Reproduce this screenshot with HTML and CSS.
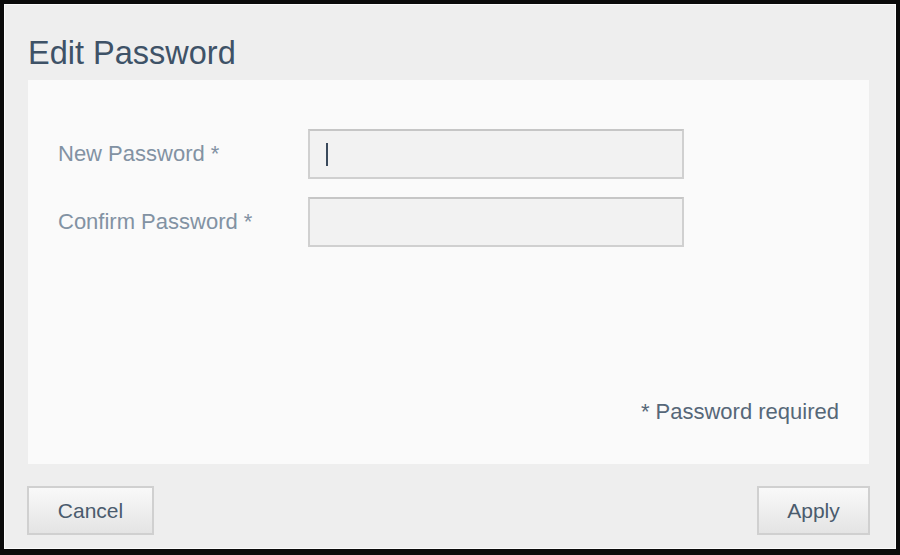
FILE: index.html
```html
<!DOCTYPE html>
<html lang="en">
<head>
<meta charset="utf-8">
<title>Edit Password</title>
<link rel="stylesheet" href="styles.css">
</head>
<body>
<div class="frame">
  <div class="dialog">
    <h1 class="title">Edit Password</h1>
    <div class="panel">
      <div class="row">
        <label class="label">New Password *</label>
        <div class="field"><span class="caret"></span></div>
      </div>
      <div class="row">
        <label class="label">Confirm Password *</label>
        <div class="field"></div>
      </div>
      <p class="note">* Password required</p>
    </div>
    <div class="footer">
      <button class="btn btn-cancel">Cancel</button>
      <button class="btn btn-apply">Apply</button>
    </div>
  </div>
</div>
</body>
</html>
```

FILE: styles.css
```css
* { box-sizing: border-box; }
html, body {
  margin: 0;
  padding: 0;
  background: #0b0b0b;
}
body {
  width: 900px;
  height: 555px;
  font-family: "Liberation Sans", Arial, sans-serif;
}
.frame {
  width: 900px;
  height: 555px;
  border: 4px solid #0b0b0b;
  border-bottom-width: 6px;
}
.dialog {
  height: 100%;
  background: #eeeeee;
  border: 1px solid #fbfbfb;
  padding: 30px 25px 13px 23px;
  display: flex;
  flex-direction: column;
}
.title {
  margin: 0 0 9px 0;
  font-weight: normal;
  font-size: 32.5px;
  line-height: 36px;
  height: 36px;
  color: #3e5267;
}
.panel {
  height: 384px;
  margin-right: 1px;
  background: #fafafa;
  padding: 49px 30px 39px 30px;
  display: flex;
  flex-direction: column;
  gap: 18px;
}
.row {
  display: flex;
  align-items: center;
  height: 50px;
}
.label {
  width: 250px;
  font-size: 22px;
  line-height: 26px;
  color: #8292a3;
}
.field {
  width: 376px;
  height: 50px;
  background: #f2f2f2;
  border: 2px solid #d0d0d0;
  border-top-color: #c6c6c6;
  display: flex;
  align-items: center;
  padding-left: 16px;
}
.caret {
  width: 2px;
  height: 23px;
  background: #3a4a5c;
}
.note {
  margin: auto 0 0 0;
  text-align: right;
  font-size: 22px;
  line-height: 26px;
  color: #566778;
}
.footer {
  margin-top: 22px;
  display: flex;
  justify-content: space-between;
  margin-left: -1px;
}
.btn {
  height: 49px;
  border: 2px solid #d0d0d0;
  background: linear-gradient(#f9f9f9, #e4e4e4);
  font-family: "Liberation Sans", Arial, sans-serif;
  font-size: 21px;
  color: #4a5b6d;
  padding: 0;
  margin: 0;
}
.btn-cancel { width: 127px; }
.btn-apply { width: 113px; }
```
